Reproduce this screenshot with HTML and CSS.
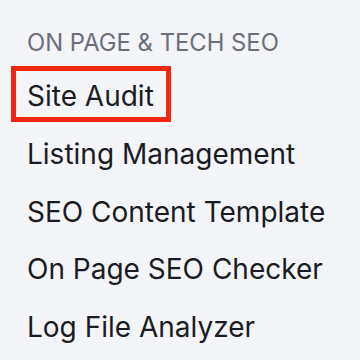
FILE: index.html
```html
<!DOCTYPE html>
<html>
<head>
<meta charset="utf-8">
<link rel="stylesheet" href="styles.css">
</head>
<body>
<nav class="menu">
  <div class="menu-heading">ON PAGE &amp; TECH SEO</div>
  <ul class="menu-list">
    <li class="menu-item is-selected">Site Audit</li>
    <li class="menu-item">Listing Management</li>
    <li class="menu-item">SEO Content Template</li>
    <li class="menu-item">On Page SEO Checker</li>
    <li class="menu-item">Log File Analyzer</li>
  </ul>
</nav>
</body>
</html>
```
FILE: styles.css
```css
html, body {
  margin: 0;
  padding: 0;
  background: #f4f5f9;
}
body {
  width: 360px;
  height: 360px;
  overflow: hidden;
  font-family: Inter, "Noto Sans", sans-serif;
}
.menu {
  padding: 23px 0 0 11px;
}
.menu-heading {
  padding-left: 16px;
  font-size: 23.8px;
  line-height: 40px;
  color: #6c6e79;
}
.menu-list {
  list-style: none;
  margin: 0;
  padding: 3px 0 0;
  display: flex;
  flex-direction: column;
  align-items: flex-start;
  gap: 1.8px;
}
.menu-item {
  font-size: 28px;
  line-height: 46px;
  padding: 2px 12px 0 11px;
  height: 44px;
  border: 5px solid transparent;
  color: #1b1c23;
}
.menu-item.is-selected {
  border-color: #f3260f;
}
```
